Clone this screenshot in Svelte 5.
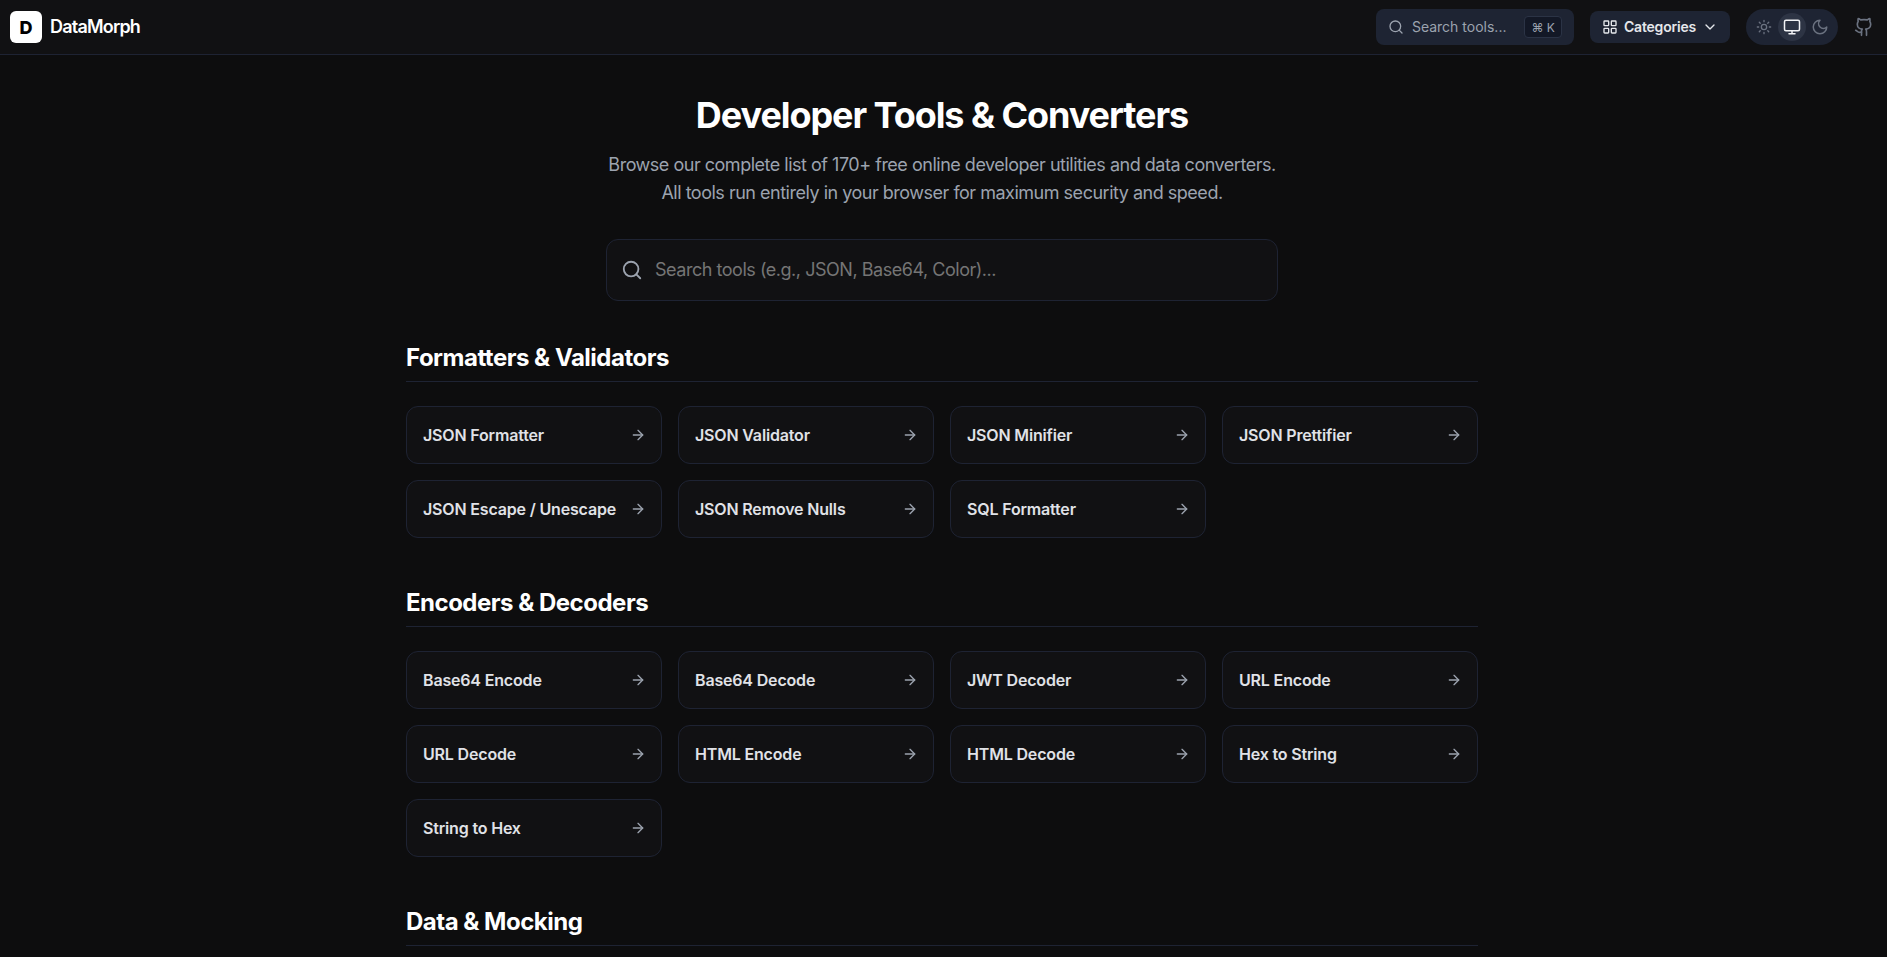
<script lang="ts">
	const sections = [
		{
			title: 'Formatters & Validators',
			tools: ['JSON Formatter', 'JSON Validator', 'JSON Minifier', 'JSON Prettifier', 'JSON Escape / Unescape', 'JSON Remove Nulls', 'SQL Formatter']
		},
		{
			title: 'Encoders & Decoders',
			tools: ['Base64 Encode', 'Base64 Decode', 'JWT Decoder', 'URL Encode', 'URL Decode', 'HTML Encode', 'HTML Decode', 'Hex to String', 'String to Hex']
		},
		{
			title: 'Data & Mocking',
			tools: []
		}
	];
</script>

<header>
	<a class="brand" href="#top">
		<span class="logo">D</span>
		<span class="name">DataMorph</span>
	</a>
	<div class="actions">
		<button class="quick">
			<svg width="16" height="16" viewBox="0 0 24 24" fill="none" stroke="currentColor" stroke-width="2" stroke-linecap="round" stroke-linejoin="round"><circle cx="11" cy="11" r="8" /><path d="m21 21-4.3-4.3" /></svg>
			<span class="quick-label">Search tools...</span>
			<kbd>⌘ K</kbd>
		</button>
		<button class="cats">
			<svg width="16" height="16" viewBox="0 0 24 24" fill="none" stroke="currentColor" stroke-width="2" stroke-linecap="round" stroke-linejoin="round"><rect x="3" y="3" width="7" height="7" rx="1" /><rect x="14" y="3" width="7" height="7" rx="1" /><rect x="14" y="14" width="7" height="7" rx="1" /><rect x="3" y="14" width="7" height="7" rx="1" /></svg>
			<span class="cats-label">Categories</span>
			<svg width="16" height="16" viewBox="0 0 24 24" fill="none" stroke="currentColor" stroke-width="2" stroke-linecap="round" stroke-linejoin="round"><path d="m6 9 6 6 6-6" /></svg>
		</button>
		<div class="theme">
			<span class="mode">
				<svg width="16" height="16" viewBox="0 0 24 24" fill="none" stroke="currentColor" stroke-width="2" stroke-linecap="round" stroke-linejoin="round"><circle cx="12" cy="12" r="4" /><path d="M12 2v2M12 20v2M4.93 4.93l1.41 1.41M17.66 17.66l1.41 1.41M2 12h2M20 12h2M6.34 17.66l-1.41 1.41M19.07 4.93l-1.41 1.41" /></svg>
			</span>
			<span class="mode active">
				<svg width="18" height="18" viewBox="0 0 24 24" fill="none" stroke="currentColor" stroke-width="2" stroke-linecap="round" stroke-linejoin="round"><rect x="2" y="3" width="20" height="14" rx="2" /><path d="M8 21h8M12 17v4" /></svg>
			</span>
			<span class="mode">
				<svg width="18" height="18" viewBox="0 0 24 24" fill="none" stroke="currentColor" stroke-width="2" stroke-linecap="round" stroke-linejoin="round"><path d="M12 3a6 6 0 0 0 9 9 9 9 0 1 1-9-9Z" /></svg>
			</span>
		</div>
		<a class="gh" href="#top" aria-label="GitHub">
			<svg width="20" height="20" viewBox="0 0 24 24" fill="none" stroke="currentColor" stroke-width="2" stroke-linecap="round" stroke-linejoin="round"><path d="M15 22v-4a4.8 4.8 0 0 0-1-3.5c3 0 6-2 6-5.5.08-1.25-.27-2.48-1-3.5.28-1.15.28-2.35 0-3.5 0 0-1 0-3 1.5-2.64-.5-5.36-.5-8 0C6 2 5 2 5 2c-.3 1.15-.3 2.35 0 3.5A5.403 5.403 0 0 0 4 9c0 3.5 3 5.5 6 5.5-.39.49-.68 1.05-.85 1.65-.17.6-.22 1.23-.15 1.85v4" /><path d="M9 18c-4.51 2-5-2-7-2" /></svg>
		</a>
	</div>
</header>

<div class="page">
	<main>
		<div class="hero">
			<h1>Developer Tools &amp; Converters</h1>
			<p>Browse our complete list of 170+ free online developer utilities and data converters.<br />All tools run entirely in your browser for maximum security and speed.</p>
			<label class="search">
				<svg width="22" height="22" viewBox="0 0 24 24" fill="none" stroke="currentColor" stroke-width="2" stroke-linecap="round" stroke-linejoin="round"><circle cx="11" cy="11" r="8" /><path d="m21 21-4.3-4.3" /></svg>
				<input type="text" placeholder="Search tools (e.g., JSON, Base64, Color)..." />
			</label>
		</div>

		{#each sections as section}
			<section>
				<h2>{section.title}</h2>
				{#if section.tools.length}
					<div class="grid">
						{#each section.tools as tool}
							<a class="card" href="#top">
								<span>{tool}</span>
								<svg width="16" height="16" viewBox="0 0 24 24" fill="none" stroke="currentColor" stroke-width="2" stroke-linecap="round" stroke-linejoin="round"><path d="M5 12h14" /><path d="m12 5 7 7-7 7" /></svg>
							</a>
						{/each}
					</div>
				{/if}
			</section>
		{/each}
	</main>
</div>

<style>
	:global(body) {
		background: #0d0d0e;
		color: #fff;
		font-family: Inter, 'Liberation Sans', sans-serif;
		height: 957px;
		overflow: hidden;
	}

	a {
		color: inherit;
		text-decoration: none;
	}

	button {
		font-family: inherit;
		border: 0;
		cursor: pointer;
	}

	header {
		height: 54px;
		background: #111113;
		border-bottom: 1px solid #1e2333;
		display: flex;
		align-items: center;
		justify-content: space-between;
		padding: 0 10px;
	}

	.brand {
		display: flex;
		align-items: center;
		gap: 8px;
	}

	.logo {
		width: 32px;
		height: 32px;
		border-radius: 6px;
		background: #fff;
		color: #000;
		font-weight: 800;
		font-size: 18px;
		display: flex;
		align-items: center;
		justify-content: center;
	}

	.name {
		font-size: 18px;
		font-weight: 600;
		letter-spacing: -0.8px;
		padding-bottom: 2px;
	}

	.actions {
		display: flex;
		align-items: center;
	}

	.quick {
		width: 198px;
		height: 36px;
		margin-right: 16px;
		padding: 0 12px;
		border-radius: 8px;
		background: #1e2433;
		color: #9ca3af;
		display: flex;
		align-items: center;
		gap: 8px;
		font-size: 14px;
	}

	.quick-label {
		flex: 1;
		text-align: left;
		white-space: nowrap;
		padding-bottom: 2px;
	}

	kbd {
		font-family: inherit;
		font-size: 12px;
		height: 22px;
		padding: 0 6px;
		box-sizing: border-box;
		display: flex;
		align-items: center;
		border: 1px solid #2b3345;
		border-radius: 4px;
		background: #131826;
	}

	.cats {
		height: 32px;
		margin-right: 16px;
		padding: 0 12px;
		border-radius: 8px;
		background: #1e2433;
		color: #e5e7eb;
		display: flex;
		align-items: center;
		gap: 6px;
		font-size: 14px;
		font-weight: 600;
		letter-spacing: -0.2px;
	}

	.cats-label {
		padding-bottom: 2px;
	}

	.theme {
		height: 36px;
		padding: 0 4px;
		box-sizing: border-box;
		border-radius: 18px;
		background: #1e2433;
		display: flex;
		align-items: center;
		margin-right: 16px;
	}

	.mode {
		width: 28px;
		height: 28px;
		border-radius: 50%;
		color: #6b7280;
		display: flex;
		align-items: center;
		justify-content: center;
	}

	.mode.active {
		background: #2d3444;
		color: #f3f4f6;
	}

	.gh {
		color: #6b7280;
		display: flex;
		padding-right: 3px;
	}

	.page {
		padding-right: 3px;
	}

	main {
		width: 1072px;
		margin: 0 auto;
	}

	.hero {
		padding-top: 40px;
		text-align: center;
	}

	h1 {
		margin: 0;
		font-size: 36px;
		line-height: 40px;
		font-weight: 700;
		letter-spacing: -1.07px;
	}

	.hero p {
		margin: 16px 0 0;
		font-size: 18px;
		line-height: 28px;
		letter-spacing: -0.49px;
		color: #9ca3af;
	}

	.search {
		width: 672px;
		height: 62px;
		box-sizing: border-box;
		margin: 32px auto 0;
		padding: 0 14px;
		display: flex;
		align-items: center;
		gap: 12px;
		background: #111113;
		border: 1px solid #1e2333;
		border-radius: 12px;
		color: #9ca3af;
	}

	input {
		flex: 1;
		background: transparent;
		border: 0;
		outline: 0;
		padding: 0 0 1px;
		font-family: inherit;
		font-size: 18px;
		letter-spacing: -0.47px;
		color: #fff;
	}

	input::placeholder {
		color: #757575;
	}

	section {
		margin-top: 48px;
	}

	.hero + section {
		margin-top: 40px;
	}

	h2 {
		margin: 0 0 24px;
		padding: 1px 0 7px;
		border-bottom: 1px solid #1e2333;
		font-size: 24px;
		line-height: 32px;
		font-weight: 700;
		letter-spacing: -0.5px;
	}

	.grid {
		display: grid;
		grid-template-columns: repeat(4, 1fr);
		gap: 16px;
	}

	.card {
		height: 58px;
		box-sizing: border-box;
		padding: 0 15px 0 16px;
		display: flex;
		align-items: center;
		justify-content: space-between;
		background: #111113;
		border: 1px solid #1e2333;
		border-radius: 12px;
		color: #e0e2e7;
		font-size: 16px;
		font-weight: 600;
		letter-spacing: -0.17px;
	}

	.card svg {
		color: #9ca3af;
		flex: none;
	}
</style>
